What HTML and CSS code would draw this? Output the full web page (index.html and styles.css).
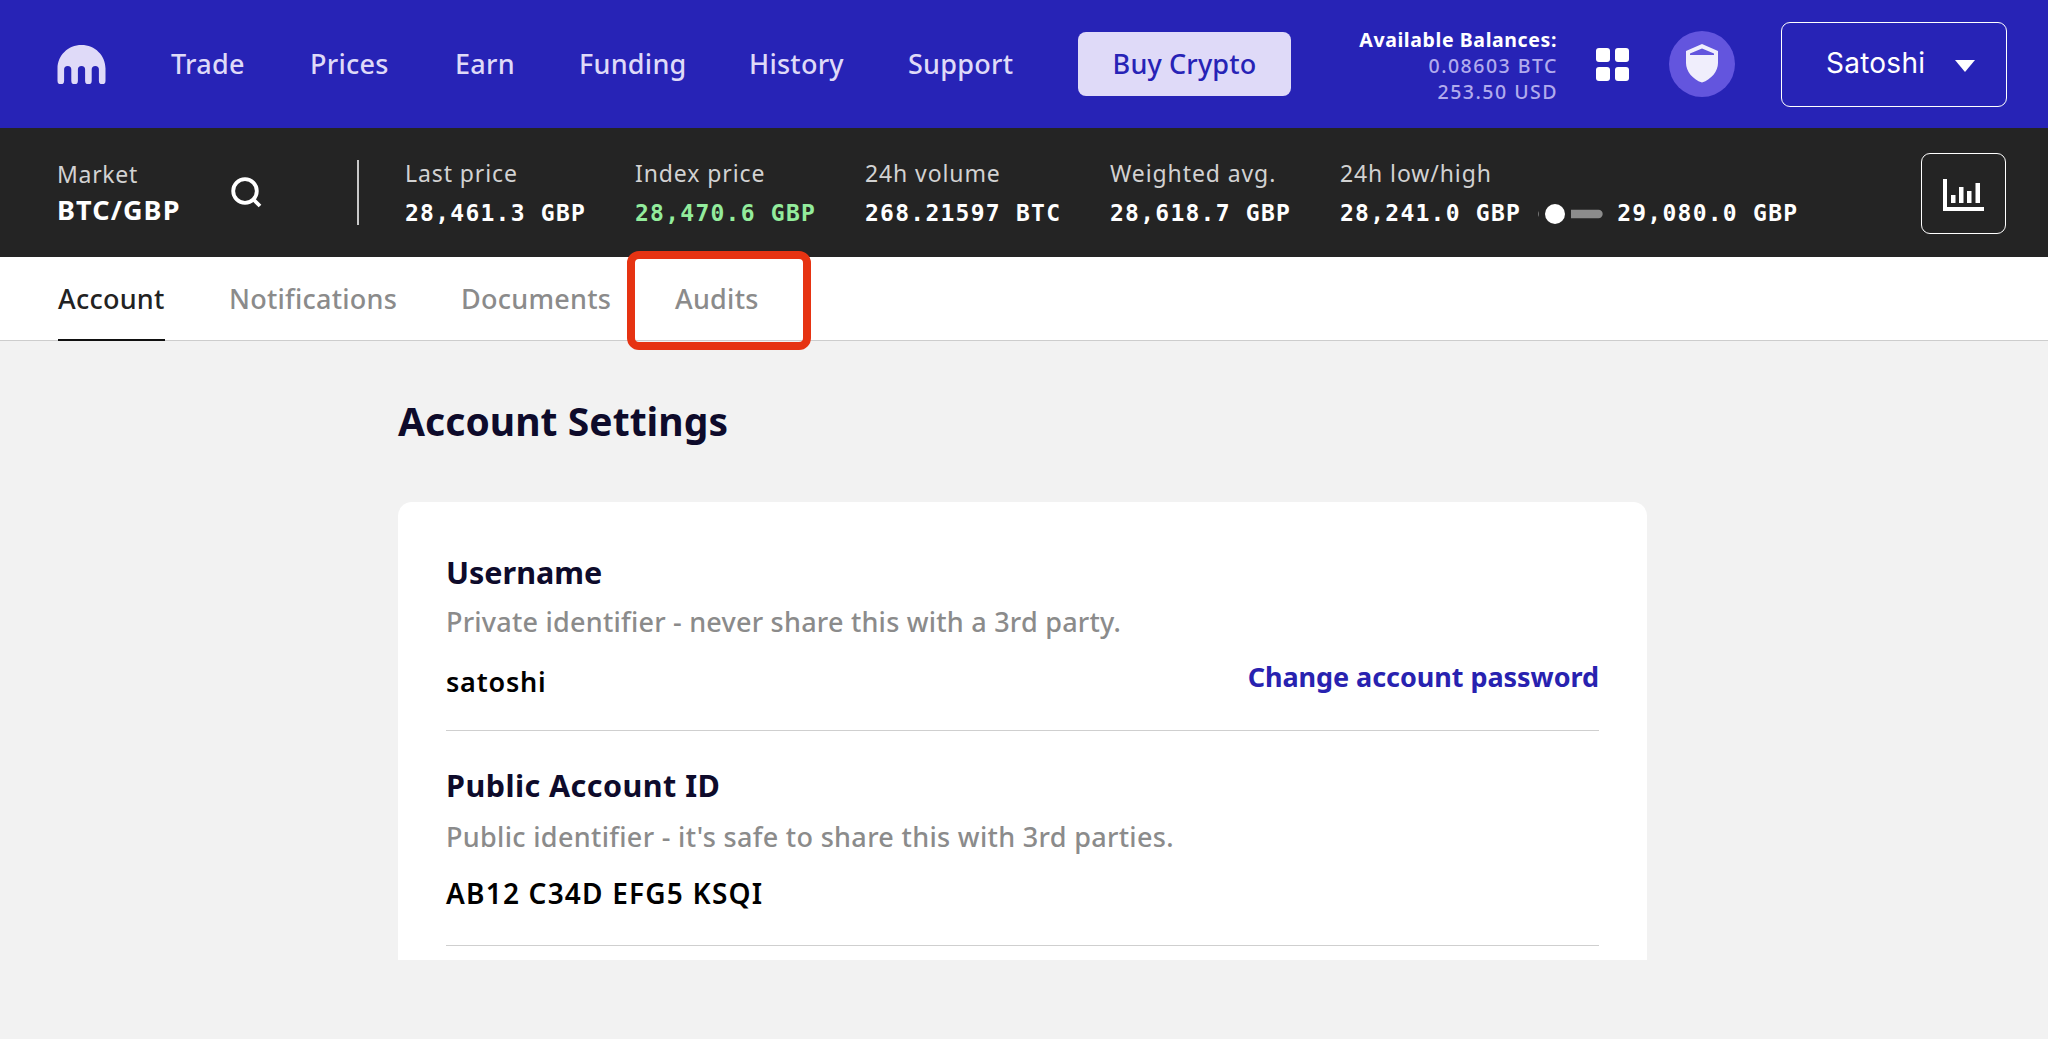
FILE: index.html
```html
<!DOCTYPE html>
<html lang="en">
<head>
<meta charset="utf-8">
<title>Account Settings</title>
<link rel="stylesheet" href="styles.css">
</head>
<body>
<header class="topbar">
  <svg class="logo" viewBox="0 0 48 39"><path d="M24 0C10.500 0 0 10.500 0 23.500V36a3.200 3.200 0 0 0 6.600 0V24.500a3.600 3.600 0 0 1 7.200 0V36a3.300 3.300 0 0 0 6.600 0V24.500a3.600 3.600 0 0 1 7.200 0V36a3.300 3.300 0 0 0 6.600 0V24.500a3.600 3.600 0 0 1 7.200 0V36a3.200 3.200 0 0 0 6.600 0V23.500C48 10.500 37.500 0 24 0Z"/></svg>
  <nav class="nav">
    <a>Trade</a><a>Prices</a><a>Earn</a><a>Funding</a><a>History</a><a>Support</a>
  </nav>
  <a class="buy">Buy Crypto</a>
  <div class="balances">
    <strong>Available Balances:</strong>
    <span class="btc">0.08603 BTC</span>
    <span class="usd">253.50 USD</span>
  </div>
  <svg class="apps" viewBox="0 0 33 33"><rect width="14" height="14" rx="3"/><rect x="19" width="14" height="14" rx="3"/><rect y="19" width="14" height="14" rx="3"/><rect x="19" y="19" width="14" height="14" rx="3"/></svg>
  <svg class="shield" viewBox="0 0 66 66"><circle cx="33" cy="33" r="33" fill="#6355de"/><path fill="#f0eefc" fill-rule="evenodd" d="M33 13 49 20V32C49 40 42.500 48.500 33 51.500C23.500 48.500 17 40 17 32V20ZM33 17.500 21 22.500V24H45V22.500Z"/></svg>
  <button class="user">Satoshi<svg viewBox="0 0 20 12"><path d="M0 0H20L10 12Z"/></svg></button>
</header>

<section class="market">
  <div class="pair"><span>Market</span><b>BTC/GBP</b></div>
  <svg class="search" viewBox="0 0 32 32"><circle cx="14" cy="14" r="11.800"/><path d="M22 22 29 29"/></svg>
  <div class="rule"></div>
  <div class="stats">
    <div class="stat"><span>Last price</span><b>28,461.3 GBP</b></div>
    <div class="stat"><span>Index price</span><b class="up">28,470.6 GBP</b></div>
    <div class="stat"><span>24h volume</span><b>268.21597 BTC</b></div>
    <div class="stat"><span>Weighted avg.</span><b>28,618.7 GBP</b></div>
    <div class="stat"><span>24h low/high</span>
      <div class="range"><b>28,241.0 GBP</b>
        <svg viewBox="0 0 66 20"><path d="M2 7Q0 10 2 13Z" fill="#777"/><circle cx="18" cy="10" r="10" fill="#fff"/><path d="M34 5.800H61.500a4.200 4.200 0 0 1 0 8.400H34Z" fill="#8c8c8c"/></svg>
        <b>29,080.0 GBP</b></div>
    </div>
  </div>
  <button class="chart"><svg viewBox="0 0 41 32"><path d="M0 0H4V28H41V32H0ZM8 16H12.500V24H8ZM16 8H20.500V24H16ZM24 12H28.500V24H24ZM32.500 4H37V24H32.500Z"/></svg></button>
</section>

<nav class="tabs">
  <a class="active">Account</a><a>Notifications</a><a>Documents</a><a class="audits">Audits</a>
</nav>

<main class="page">
  <h1>Account Settings</h1>
  <div class="card">
    <section class="field">
      <h2>Username</h2>
      <p class="private">Private identifier - never share this with a 3rd party.</p>
      <div class="value"><strong>satoshi</strong><a>Change account password</a></div>
    </section>
    <section class="field second">
      <h2 class="id-title">Public Account ID</h2>
      <p>Public identifier - it's safe to share this with 3rd parties.</p>
      <div class="value id"><strong>AB12 C34D EFG5 KSQI</strong></div>
    </section>
  </div>
</main>
</body>
</html>
```
FILE: styles.css
```css
*, *::after { box-sizing: border-box; }
body {
  margin: 0;
  background: #f2f2f2;
  font: 500 27px/40px "Noto Sans", sans-serif;
  white-space: nowrap;
}
button { background: none; font: inherit; padding: 0; display: flex; align-items: center; }
svg { display: block; flex: none; }
h1, h2, p { margin: 0; }

.topbar {
  height: 128px;
  background: #2723b6;
  color: #dfdaf8;
  display: flex;
  align-items: center;
  padding-left: 57px;
}
.logo { width: 49px; height: 39px; fill: #dfdaf8; }
.nav {
  display: grid;
  grid-template-columns: 139px 145px 124px 170px 159px auto;
  width: 907px;
  margin-left: 65px;
}
.nav a { letter-spacing: 0.25px; }
.buy {
  width: 213px;
  height: 64px;
  border-radius: 8px;
  background: #dfdaf8;
  color: #2723b6;
  line-height: 63px;
  text-align: center;
  letter-spacing: 0.15px;
}
.balances {
  width: 266px;
  padding-top: 3px;
  font-size: 19.5px;
  line-height: 26px;
  text-align: right;
  display: flex;
  flex-direction: column;
  color: #b1abed;
}
.balances strong { color: #fff; letter-spacing: 0.6px; }
.btc, .usd { letter-spacing: 1.5px; margin-right: -1px; }
.apps { width: 33px; height: 33px; margin-left: 39px; fill: #fff; }
.shield { width: 66px; height: 66px; margin-left: 40px; }
.user {
  width: 226px;
  height: 85px;
  margin: 1px 0 0 46px;
  padding: 0 0 3px 44px;
  border: 1.5px solid #fff;
  border-radius: 9px;
  color: #fff;
  font: 400 28px/40px Inter, sans-serif;
  letter-spacing: 0.25px;
}
.user svg { width: 20px; height: 12px; margin: 6px 0 0 30px; fill: #fff; }

.market {
  height: 129px;
  background: #242424;
  color: #fff;
  display: flex;
  align-items: center;
  padding-left: 57px;
}
.pair { width: 174px; display: flex; flex-direction: column; line-height: 36px; padding-bottom: 2px; }
.pair span, .stat span { color: #d2d2d2; font-size: 23px; font-weight: 400; }
.pair span { letter-spacing: 0.7px; }
.pair b { letter-spacing: 1.1px; }
.search { width: 32px; height: 32px; fill: none; stroke: #fff; stroke-width: 3.8; margin: 1px 0 0 0; }
.rule { width: 2px; height: 65px; margin-left: 94px; background: #c9c9c9; }
.stats {
  display: grid;
  grid-template-columns: 230px 230px 245px 230px auto;
  width: 1516px;
  margin-left: 46px;
}
.stat { display: flex; flex-direction: column; line-height: 43px; padding-bottom: 1px; }
.stat span { letter-spacing: 0.9px; }
.stat b { font: 700 23px/40px "DejaVu Sans Mono", monospace; letter-spacing: 1.25px; margin-top: -2px; }
.stat .up { color: #93ec9c; }
.range { display: flex; align-items: center; }
.range svg { width: 66px; height: 20px; margin: 0 14px 0 16px; }
.chart { width: 85px; height: 81px; justify-content: center; border: 1.5px solid #fff; border-radius: 9px; margin-top: 1px; }
.chart svg { width: 41px; height: 32px; fill: #fff; margin-top: 4px; }

.tabs {
  height: 84px;
  border-bottom: 1px solid #cdcdcd;
  background: #fff;
  color: #8b8b8b;
  display: grid;
  grid-template-columns: 171px 232px 214px auto;
  padding-left: 58px;
  line-height: 83px;
}
.tabs a { letter-spacing: 0.25px; justify-self: start; }
.tabs .active { height: 84px; color: #222; border-bottom: 2px solid #111; }
.tabs .audits { position: relative; }
.audits::after {
  content: "";
  position: absolute;
  left: -48px;
  top: -6px;
  width: 184px;
  height: 99px;
  border: 8px solid #e63312;
  border-radius: 12px;
}

.page { width: 1249px; margin-left: 398px; color: #0e0b2b; }
h1 { padding-top: 50px; height: 161px; font-size: 39px; line-height: 60px; letter-spacing: 0.05px; }
.card { background: #fff; height: 458px; border-radius: 14px 14px 0 0; padding: 50px 48px 0; }
.field { border-bottom: 1px solid #cfcfcf; padding-bottom: 28px; }
h2 { font-size: 30.5px; line-height: 40px; }
.id-title { letter-spacing: 0.45px; }
.field p { color: #8b8b8b; margin-top: 10px; letter-spacing: 0.32px; }
.field .private { letter-spacing: 0.23px; }
.value { display: flex; justify-content: space-between; margin-top: 20px; color: #000; }
.value strong { font-weight: 600; letter-spacing: 0.8px; }
.value a { color: #2822b0; font-weight: 700; margin-top: -5px; height: 40px; letter-spacing: -0.05px; }
.second { padding: 34px 0 32px; }
.second p { margin-top: 12px; }
.value.id { margin-top: 16px; }
.id strong { font-size: 28px; letter-spacing: 1.2px; }
```
